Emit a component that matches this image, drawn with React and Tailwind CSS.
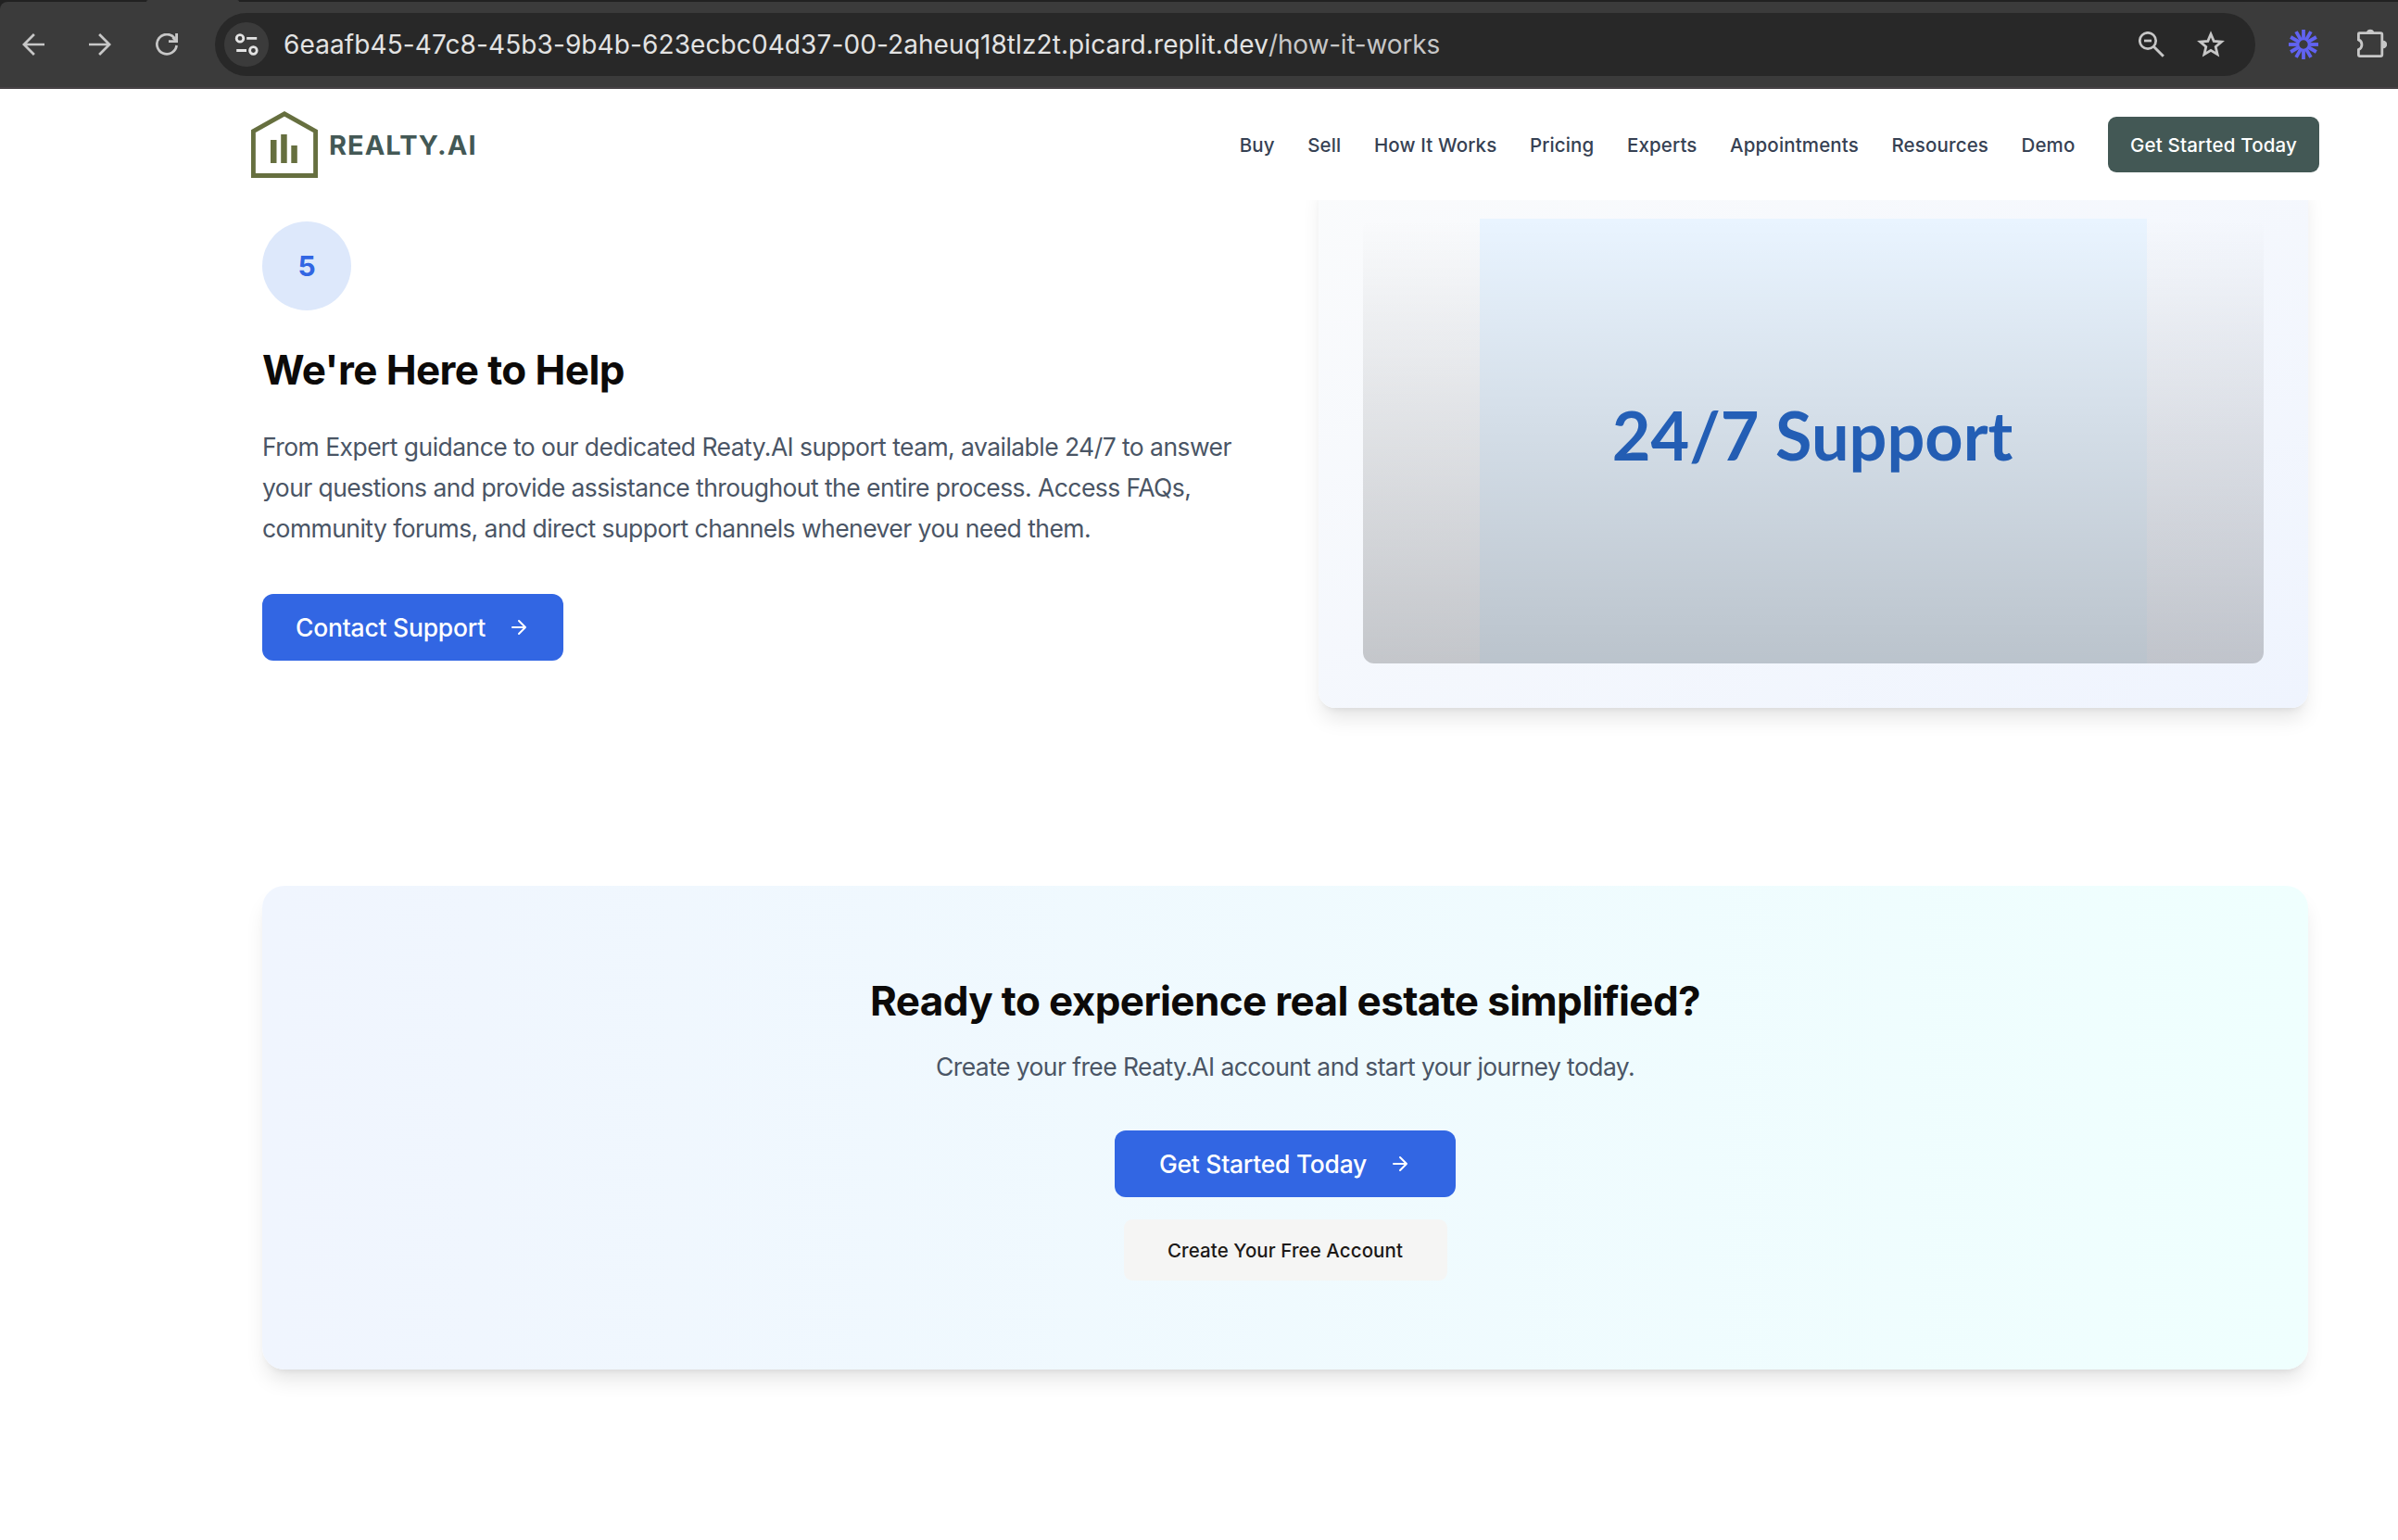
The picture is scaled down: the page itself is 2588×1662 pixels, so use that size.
import React from 'react';

const links = ['Buy', 'Sell', 'How It Works', 'Pricing', 'Experts', 'Appointments', 'Resources', 'Demo'];

function ArrowRight() {
  return (
    <svg className="size-6 shrink-0" viewBox="0 0 24 24" fill="none" stroke="currentColor" strokeWidth="2" strokeLinecap="round" strokeLinejoin="round">
      <path d="M5 12h14M12 5l7 7-7 7" />
    </svg>
  );
}

function NavArrow({ className }) {
  return (
    <svg className={className} viewBox="0 0 24 24" fill="none" stroke="#c7c7c7" strokeWidth="2.7">
      <path d="M24 12H2M12.9 1L1.9 12L12.9 23" />
    </svg>
  );
}

function Reload() {
  return (
    <svg className="size-6 shrink-0" viewBox="0 0 24 24" fill="none" stroke="#c7c7c7" strokeWidth="2.7">
      <path d="M20.6 5.4A10.65 10.65 0 1 0 22.6 13" />
      <path d="M14 8.6H22.6V0" strokeWidth="2.9" />
      <path d="M18.5 4.5L22 8" strokeWidth="2.7" />
    </svg>
  );
}

function SiteSettings() {
  return (
    <svg className="h-6 w-[26px]" viewBox="0 0 26 24" fill="none" stroke="#e3e3e3" strokeWidth="2.8">
      <circle cx="6" cy="5.4" r="3.8" />
      <path d="M13.2 5.4H24.2M2.2 18.5H13" />
      <circle cx="20.4" cy="18.5" r="3.8" />
    </svg>
  );
}

function ZoomOut() {
  return (
    <svg className="size-7 shrink-0" viewBox="0 0 28 28" fill="none" stroke="#c7c7c7" strokeWidth="2.7">
      <circle cx="10" cy="10" r="8.7" />
      <path d="M16.3 16.3L26.8 26.8" strokeWidth="3" />
      <path d="M6 10H14" strokeWidth="2.7" />
    </svg>
  );
}

function Star() {
  return (
    <svg className="h-[30px] w-8 shrink-0" viewBox="0 0 32 30" fill="none" stroke="#c7c7c7" strokeWidth="2.8" strokeMiterlimit="10">
      <path d="M16 3.8L19.2 11.4L27.5 12.1L21.2 17.5L23.1 25.7L16 21.4L8.9 25.7L10.8 17.5L4.5 12.1L12.8 11.4Z" />
    </svg>
  );
}

function Burst() {
  const angles = [0, 30, 60, 90, 120, 150, 180, 210, 240, 270, 300, 330];
  return (
    <svg className="size-8 shrink-0" viewBox="0 0 32 32" stroke="#6163f1" strokeWidth="3.8">
      {angles.map((a) => (
        <path key={a} d="M16 0V11" transform={`rotate(${a} 16 16)`} />
      ))}
      <circle cx="16" cy="16" r="5.4" fill="none" strokeWidth="1.4" />
    </svg>
  );
}

function Puzzle() {
  return (
    <svg className="size-8 shrink-0" viewBox="0 0 32 32">
      <path d="M2.2 5.6H25.2Q26.8 5.6 26.8 7.2V29Q26.8 30.6 25.2 30.6H3Q1.4 30.6 1.4 29V23.6A5.8 5.8 0 0 0 1.4 12.9V6.4Q1.4 5.6 2.2 5.6Z" fill="none" stroke="#c7c7c7" strokeWidth="2.8" />
      <path d="M10 5A4.2 4.2 0 0 1 18.2 5ZM28 13.8A4.2 4.2 0 0 1 28 22.2Z" fill="#c7c7c7" />
    </svg>
  );
}

function BrowserBar() {
  return (
    <div className="h-24 bg-[#212121]">
      <div className="flex h-0.5">
        <div className="w-[158px]" />
        <div className="h-0.5 w-[100px] rounded-t-full bg-[#3b3b3b]" />
      </div>
      <div className="flex h-[94px] items-center rounded-tl-lg border-b-2 border-[#464245] bg-[#3b3b3b] pl-6">
        <NavArrow className="size-6 shrink-0" />
        <NavArrow className="ml-12 size-6 shrink-0 rotate-180" />
        <div className="ml-12">
          <Reload />
        </div>
        <div className="ml-10 flex h-[68px] w-[2202px] shrink-0 items-center rounded-full bg-[#282828] pr-8 pl-2.5">
          <div className="flex size-12 items-center justify-center rounded-full bg-[#3b3b3b]">
            <SiteSettings />
          </div>
          <div className="ml-4 text-[28px] leading-none whitespace-nowrap text-[#e3e3e3]">
            <span className="tracking-[0.0035em]">6eaafb45-47c8-45b3-9b4b-623ecbc04d37-00-2aheuq18tlz2t.picard.replit.dev</span>
            <span className="tracking-[-0.0064em] text-[#c7c7c7]">/how-it-works</span>
          </div>
          <div className="ml-auto flex items-center gap-[34px]">
            <ZoomOut />
            <Star />
          </div>
        </div>
        <div className="ml-9 flex shrink-0 items-center gap-[42px]">
          <Burst />
          <div className="-mt-1">
            <Puzzle />
          </div>
        </div>
      </div>
    </div>
  );
}

function Logo() {
  return (
    <div className="flex items-center gap-3">
      <svg className="size-[72px]" viewBox="0 0 72 72">
        <path d="M2.4 21.6L36 2.9L69.6 21.6V69.5H2.4Z" fill="none" stroke="#666f3f" strokeWidth="4.9" />
        <path d="M21 31H27.5V56H21ZM32.2 25H38.7V56H32.2ZM43.3 37H49.8V56H43.3Z" fill="#666f3f" />
      </svg>
      <span className="text-[29px] leading-none font-bold tracking-[0.035em] text-[#435855]">REALTY.AI</span>
    </div>
  );
}

function SiteHeader() {
  return (
    <header className="relative z-10 flex h-[120px] items-center justify-between bg-white/95 pr-[85px] pl-[271px]">
      <Logo />
      <nav className="flex items-center gap-[35.5px] text-[20.5px] font-medium tracking-[0.007em] text-gray-700">
        {links.map((l) => (
          <a key={l} className="pt-0.5 whitespace-nowrap">{l}</a>
        ))}
        <button className="flex h-[60px] w-[228px] items-center justify-center rounded-[9px] bg-[#435855] pt-0.5 tracking-[0.009em] text-white">Get Started Today</button>
      </nav>
    </header>
  );
}

export default function App() {
  return (
    <div className="h-[1662px] w-[2588px] overflow-hidden bg-white font-['Inter',sans-serif] antialiased">
      <BrowserBar />
      <SiteHeader />
      <main className="-mt-7 pr-[97px] pl-[283px]">
        <section className="grid grid-cols-2 items-center gap-[72px]">
          <div className="flex flex-col items-start">
            <div className="flex size-24 items-center justify-center rounded-full bg-[#dde8fb] text-[30px] font-bold text-[#3266e3]">5</div>
            <h2 className="mt-[37px] text-[44px] leading-[54px] font-bold tracking-[-0.0134em] text-stone-950">We're Here to Help</h2>
            <p className="mt-[35px] text-[26.5px] leading-[43.9px] tracking-[-0.021em] whitespace-nowrap text-gray-600">
              From Expert guidance to our dedicated Reaty.AI support team, available 24/7 to answer<br />
              your questions and provide assistance throughout the entire process. Access FAQs,<br />
              community forums, and direct support channels whenever you need them.
            </p>
            <button className="mt-12 flex h-[72px] w-[325px] items-center justify-between rounded-xl bg-[#3266e3] px-9 text-[26.5px] font-medium tracking-[-0.009em] text-white">
              <span className="pt-0.5">Contact Support</span>
              <ArrowRight />
            </button>
          </div>
          <div className="rounded-[18px] bg-linear-to-br from-[#fafbfc] to-[#eff4fe] p-12 shadow-[0_15px_22.5px_-4.5px_rgba(0,0,0,0.1),0_6px_9px_-6px_rgba(0,0,0,0.1)]">
            <div className="relative flex h-[480px] justify-center overflow-hidden rounded-xl">
              <div className="flex w-[720px] items-center justify-center bg-[#e9f4ff] pr-0.5 pb-3.5 font-['Lato',sans-serif] text-[72px] leading-none font-bold whitespace-nowrap text-[#2768c8]">24/7 Support</div>
              <div className="absolute inset-0 bg-linear-to-t from-black/20 to-transparent" />
            </div>
          </div>
        </section>
        <section className="mt-48 flex flex-col items-center rounded-3xl bg-linear-to-r from-[#f0f5fe] to-[#effffe] py-24 shadow-[0_15px_22.5px_-4.5px_rgba(0,0,0,0.1),0_6px_9px_-6px_rgba(0,0,0,0.1)]">
          <h2 className="mt-px text-[44px] leading-[54px] font-bold tracking-[-0.0142em] text-stone-950">Ready to experience real estate simplified?</h2>
          <p className="mt-[23px] text-[26.5px] leading-[42px] tracking-[-0.0218em] text-gray-600">Create your free Reaty.AI account and start your journey today.</p>
          <button className="mt-12 flex h-[72px] w-[368px] items-center justify-between rounded-xl bg-[#3266e3] px-12 text-[26.5px] font-medium tracking-[-0.0105em] text-white">
            <span className="pt-0.5">Get Started Today</span>
            <ArrowRight />
          </button>
          <button className="mt-6 flex h-[66px] w-[349px] items-center justify-center rounded-[9px] bg-stone-100 pt-0.5 text-[20.5px] font-medium tracking-[0.004em] text-stone-900">Create Your Free Account</button>
        </section>
      </main>
    </div>
  );
}
